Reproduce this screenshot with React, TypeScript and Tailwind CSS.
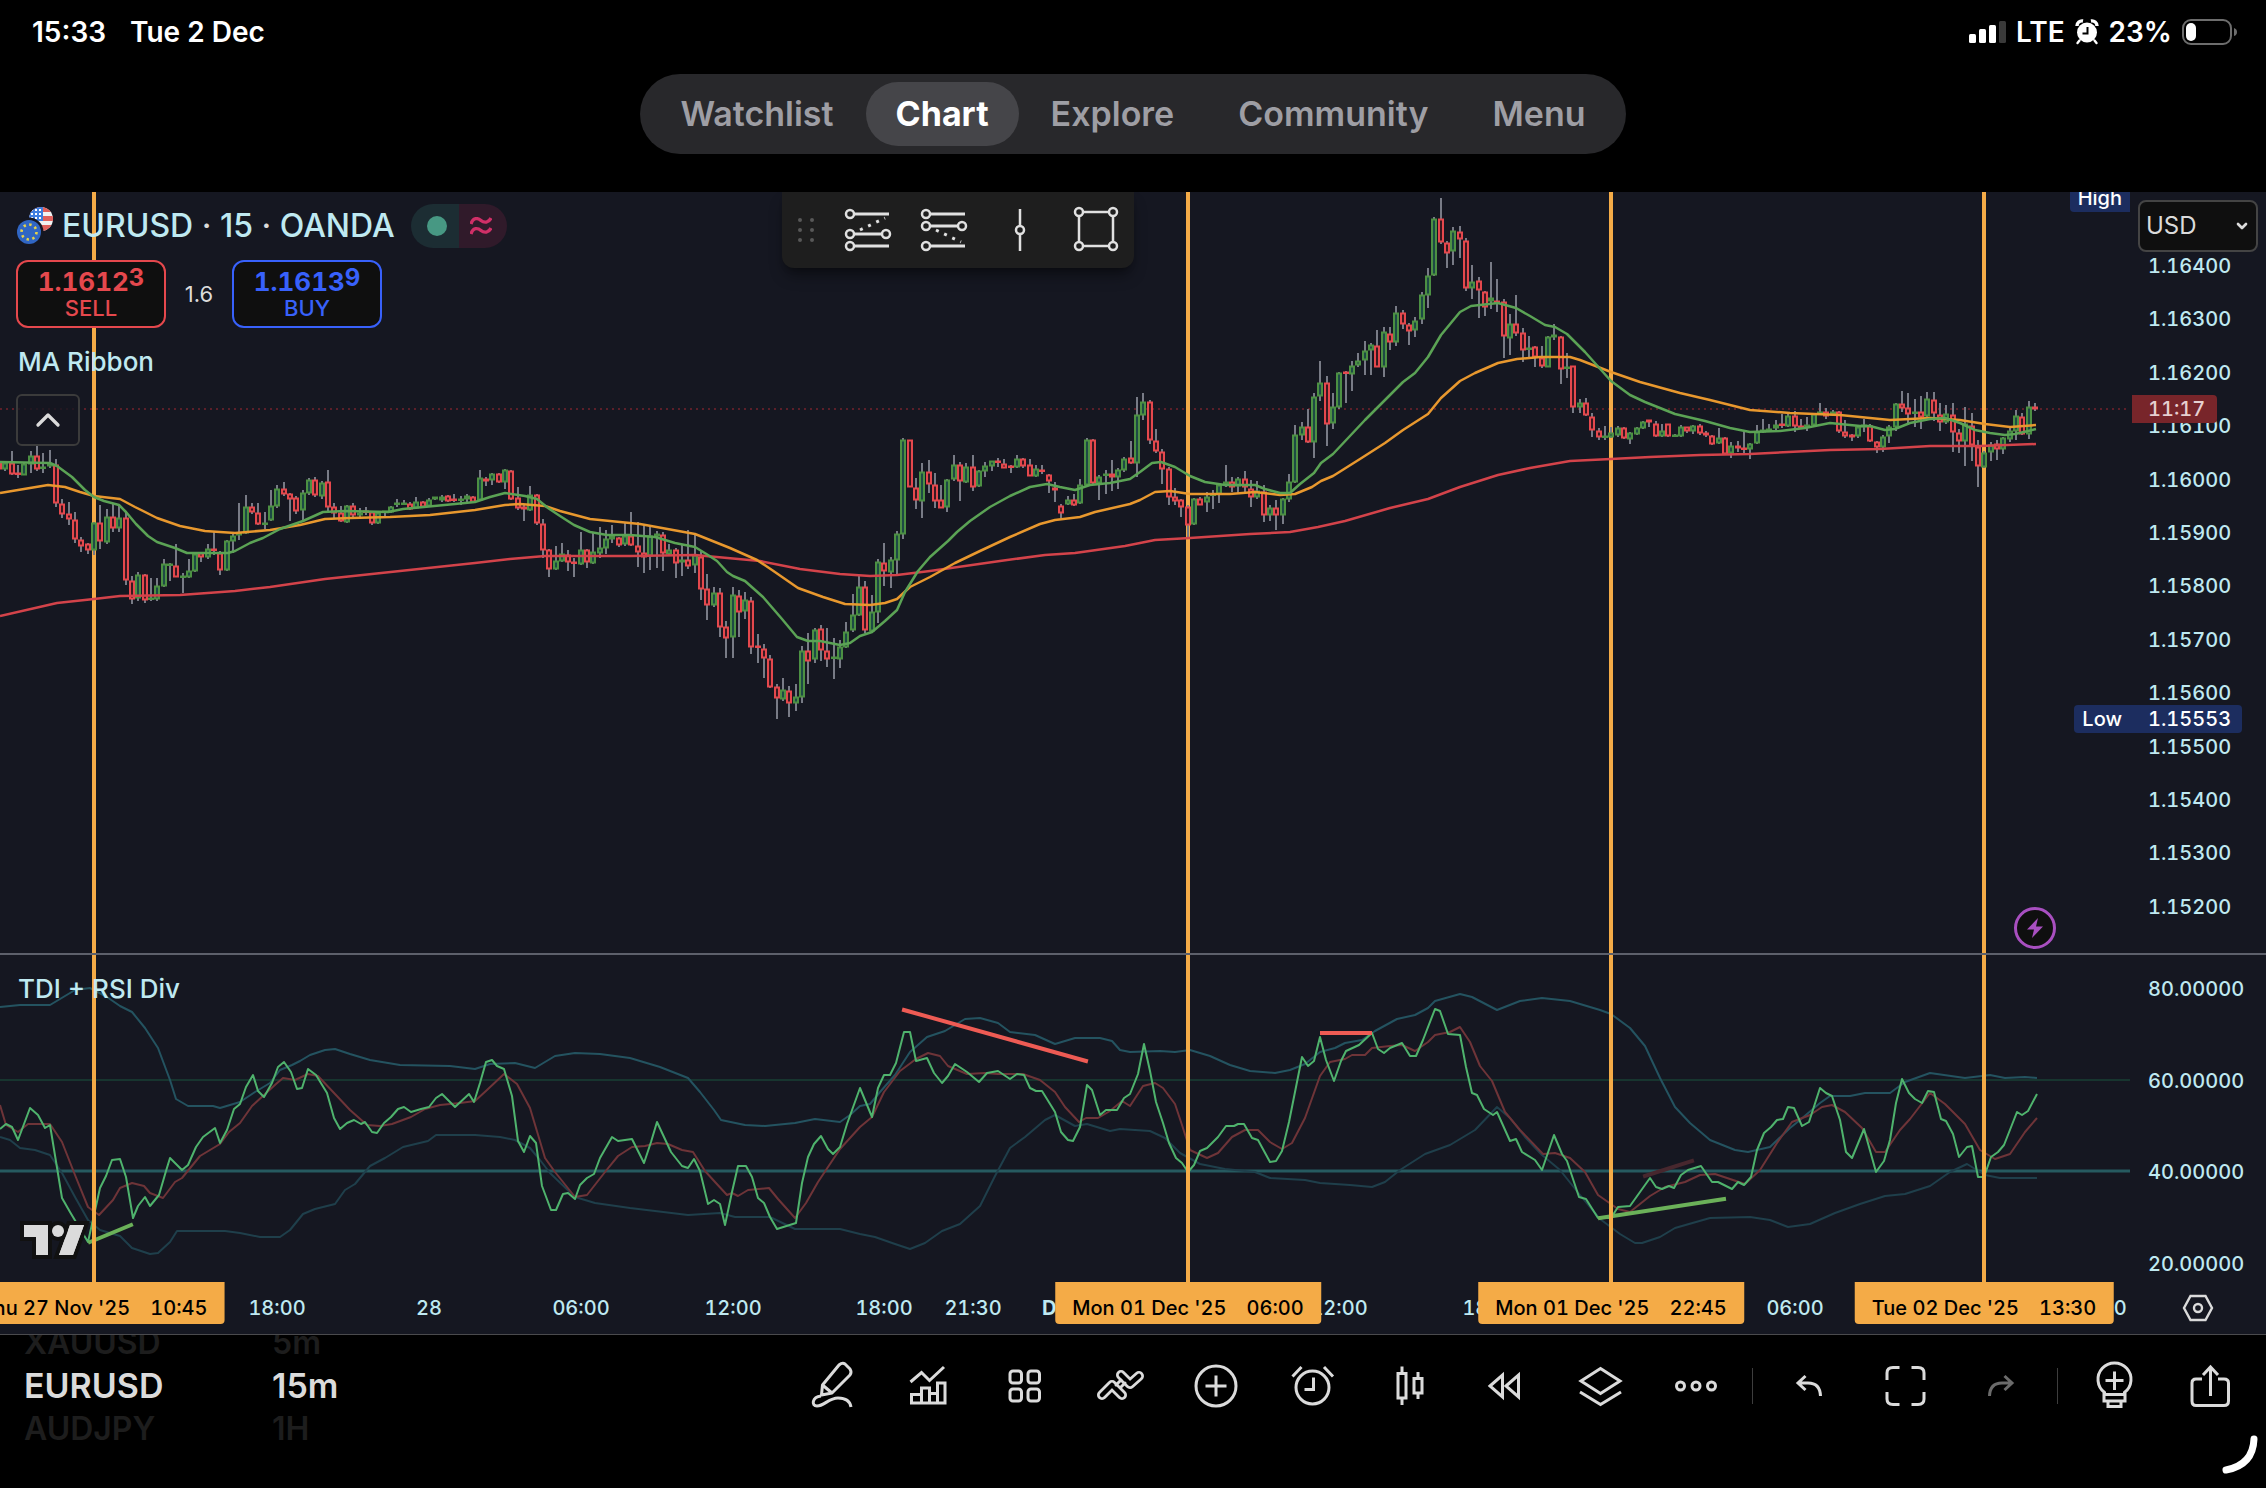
import type { ReactNode } from 'react';
import { ChevronDown, ChevronUp } from 'lucide-react';

type Bar = [open: number, high: number, low: number, close: number];

const PLOT_WIDTH = 2130;
const BAR_STEP = 6.322;
const ORIGIN_X = 94;

const barX = (index: number) => Math.round(ORIGIN_X + index * BAR_STEP);

// Bars are stored as offsets from the top of their block, three units per pixel
const blocks: { first: number; top: number; bars: Bar[] }[] = [
  {
    first: -15,
    top: 400,
    bars: [
      [190, 185, 210, 208], [208, 182, 212, 190], [190, 154, 225, 221], [218, 195, 235, 221], [224, 188, 226, 193],
      [192, 152, 220, 167], [167, 138, 212, 206], [203, 158, 218, 200], [198, 150, 204, 193], [194, 178, 320, 310],
      [313, 297, 355, 341], [341, 305, 375, 358], [360, 335, 430, 416], [419, 411, 455, 438], [433, 430, 462, 451],
      [451, 365, 465, 370], [370, 316, 447, 423], [425, 328, 433, 350], [352, 310, 395, 384], [383, 318, 397, 353],
      [353, 334, 555, 541], [543, 527, 612, 598], [594, 517, 604, 525], [526, 522, 609, 600], [598, 535, 603, 594],
      [597, 535, 602, 558], [558, 476, 562, 493], [495, 489, 543, 491], [497, 433, 532, 530], [531, 518, 580, 528],
      [531, 478, 533, 513], [514, 455, 517, 461], [460, 457, 485, 471], [472, 433, 476, 448], [446, 392, 464, 450],
      [459, 452, 525, 510], [510, 420, 512, 424], [423, 395, 458, 408], [404, 310, 420, 400], [399, 286, 403, 321],
      [321, 308, 342, 336], [338, 310, 375, 371], [373, 336, 388, 369], [361, 270, 363, 318], [319, 254, 324, 266],
      [268, 246, 287, 281], [283, 278, 363, 297], [294, 287, 342, 332], [329, 270, 363, 278], [278, 235, 284, 239],
      [239, 232, 290, 286], [288, 243, 297, 248], [246, 211, 333, 321], [322, 310, 358, 340], [338, 317, 366, 363],
      [366, 315, 370, 319], [319, 308, 350, 344], [344, 324, 350, 340], [333, 322, 346, 337], [337, 333, 376, 368],
      [368, 336, 372, 340], [337, 336, 350, 333], [336, 318, 340, 321], [312, 297, 320, 308], [312, 300, 312, 308],
      [313, 306, 330, 327], [324, 292, 328, 307], [307, 303, 322, 320], [318, 294, 322, 299], [296, 290, 300, 292],
      [300, 285, 306, 290], [289, 284, 305, 302], [296, 282, 305, 300], [301, 289, 315, 297], [298, 282, 307, 289],
      [292, 287, 307, 305], [300, 211, 304, 234], [236, 230, 258, 243], [241, 220, 255, 222], [223, 219, 249, 245],
      [245, 206, 267, 210], [212, 210, 300, 296], [293, 262, 330, 325], [322, 316, 363, 326], [331, 259, 334, 286],
      [285, 282, 374, 368], [373, 358, 474, 451], [451, 446, 532, 506], [506, 437, 510, 484], [484, 430, 487, 462],
      [466, 449, 514, 486], [485, 473, 532, 489], [491, 397, 494, 451], [451, 448, 504, 486], [489, 397, 493, 457],
      [458, 382, 475, 444], [444, 391, 461, 418], [418, 374, 430, 407], [415, 410, 440, 435], [433, 370, 437, 407],
      [408, 337, 438, 434], [438, 367, 502, 457], [459, 371, 520, 470], [467, 378, 510, 408], [409, 394, 503, 403],
      [404, 396, 514, 459], [462, 433, 465, 451], [451, 444, 535, 489], [487, 436, 528, 480], [480, 389, 507, 497],
      [496, 403, 518, 466], [470, 453, 600, 567], [568, 521, 660, 615], [615, 560, 620, 579], [578, 563, 712, 680],
      [682, 662, 773, 714], [711, 560, 773, 586], [588, 570, 710, 635], [633, 575, 658, 600], [603, 591, 762, 740],
      [738, 703, 790, 742], [747, 732, 835, 774], [778, 766, 863, 860], [862, 852, 956, 894], [898, 833, 902, 870],
      [872, 858, 950, 910], [910, 851, 932, 892], [891, 738, 908, 753], [753, 700, 853, 783], [777, 684, 790, 690],
      [688, 675, 783, 751], [754, 683, 801, 776], [775, 713, 836, 771], [776, 721, 805, 742], [740, 666, 743, 695],
      [690, 582, 697, 646], [644, 528, 648, 562], [562, 544, 698, 690], [692, 585, 698, 637], [635, 476, 668, 487],
      [489, 430, 558, 513], [515, 472, 565, 481], [480, 394, 528, 402], [401, 115, 417, 121], [121, 119, 262, 260],
      [263, 233, 327, 299], [302, 188, 355, 217], [216, 181, 280, 251], [254, 220, 325, 302], [301, 256, 325, 323],
      [322, 238, 337, 240], [238, 166, 242, 195], [195, 186, 303, 242], [246, 190, 250, 200], [201, 164, 272, 260],
      [258, 210, 260, 212], [212, 186, 230, 198], [197, 182, 214, 184], [182, 175, 200, 186], [192, 178, 205, 203],
      [197, 196, 218, 201], [200, 166, 203, 178], [178, 174, 203, 198], [195, 178, 229, 227], [227, 195, 231, 207],
      [209, 195, 222, 214], [225, 222, 280, 242], [263, 246, 306, 269], [317, 312, 355, 338], [312, 288, 315, 299],
      [299, 282, 318, 314], [308, 236, 312, 256], [256, 113, 262, 121], [121, 118, 255, 248], [248, 226, 301, 230],
      [226, 211, 282, 222], [222, 181, 274, 230], [230, 203, 267, 210], [211, 170, 215, 177], [174, 122, 192, 188],
      [190, -10, 232, 44], [44, -20, 60, 5], [5, 0, 133, 120], [123, 86, 158, 154], [156, 146, 253, 206],
      [206, 202, 316, 290], [290, 264, 314, 302], [300, 296, 352, 320], [320, 316, 412, 375], [372, 294, 376, 298],
      [296, 292, 316, 314], [307, 276, 337, 290], [286, 270, 327, 283], [282, 250, 310, 255], [253, 196, 262, 247],
      [247, 232, 276, 260], [259, 232, 278, 236], [237, 214, 280, 261], [266, 241, 322, 290], [292, 244, 297, 273],
      [276, 254, 367, 346], [346, 314, 363, 324], [325, 300, 390, 346], [346, 293, 373, 298], [297, 221, 305, 246],
      [245, 76, 248, 104],
    ],
  },
  {
    first: 191,
    top: 180,
    bars: [
      [765, 727, 780, 740], [740, 688, 790, 787], [787, 640, 834, 650], [649, 544, 662, 608], [608, 588, 798, 733],
      [730, 640, 747, 682], [682, 576, 686, 578], [575, 573, 668, 579], [583, 542, 633, 559], [556, 519, 562, 542],
      [539, 484, 585, 512], [511, 488, 585, 494], [498, 451, 562, 560], [560, 441, 590, 455], [461, 440, 509, 486],
      [487, 379, 497, 398], [398, 390, 447, 431], [434, 430, 495, 452], [449, 412, 470, 423], [418, 335, 432, 344],
      [344, 265, 383, 287], [286, 112, 288, 116], [116, 54, 191, 187], [188, 183, 264, 218], [214, 142, 254, 152],
      [155, 139, 233, 178], [182, 173, 334, 325], [325, 256, 356, 305], [302, 292, 413, 331], [335, 333, 408, 382],
      [364, 247, 388, 353], [364, 297, 396, 368], [367, 357, 533, 469], [475, 403, 525, 433], [431, 346, 468, 460],
      [460, 443, 546, 511], [508, 468, 535, 503], [501, 497, 560, 531], [533, 498, 563, 559], [560, 469, 562, 471],
      [470, 433, 480, 466], [471, 468, 612, 566], [565, 519, 595, 560], [559, 557, 698, 680], [680, 658, 698, 669],
      [669, 655, 708, 706], [710, 700, 770, 751], [752, 744, 780, 770], [771, 738, 780, 767], [770, 741, 773, 760],
      [765, 738, 770, 744], [744, 742, 777, 775], [776, 757, 792, 760], [763, 741, 766, 745], [745, 722, 748, 725],
      [721, 719, 740, 725], [733, 722, 771, 769], [768, 733, 771, 752], [733, 731, 771, 769], [769, 762, 771, 765],
      [767, 736, 770, 740], [742, 740, 758, 754], [754, 734, 762, 738], [737, 733, 765, 758], [758, 752, 770, 766],
      [769, 765, 794, 791], [789, 744, 793, 774], [774, 771, 824, 822], [820, 786, 834, 797], [797, 782, 817, 804],
      [803, 752, 822, 807], [806, 790, 837, 793], [790, 736, 793, 755], [755, 716, 758, 751], [752, 731, 754, 748],
      [745, 719, 756, 735], [732, 702, 745, 735], [737, 703, 742, 707], [707, 693, 756, 738], [737, 718, 745, 741],
      [741, 710, 753, 734], [734, 699, 737, 703], [703, 670, 706, 696], [697, 684, 718, 709], [706, 691, 709, 695],
      [695, 693, 758, 754], [757, 721, 774, 767], [766, 763, 782, 770], [769, 737, 773, 740], [740, 718, 755, 736],
      [737, 733, 786, 783], [787, 782, 819, 800], [802, 766, 817, 770], [769, 735, 788, 741], [740, 669, 754, 673],
      [671, 633, 697, 684], [685, 640, 735, 702], [700, 658, 741, 696], [695, 649, 747, 710], [709, 637, 713, 656],
      [660, 637, 722, 700], [706, 670, 752, 727], [727, 675, 733, 703], [705, 670, 815, 757], [758, 748, 820, 783],
      [784, 682, 858, 732], [737, 700, 843, 795], [800, 780, 922, 859], [860, 812, 865, 820], [817, 787, 843, 796],
      [792, 780, 840, 808], [808, 770, 822, 773], [776, 742, 785, 754], [752, 690, 780, 708], [711, 700, 766, 763],
      [763, 664, 776, 682], [680, 668, 693, 688],
    ],
  },
];

const fastMa =
  '0,462 50,463 57,466 72,477 85,490 94,497 104,501 119,505 126,512 136,524 148,536 157,542 175,548 187,553 206,553 228,553 235,551 250,543 263,538 280,529 303,521 323,512 345,511 388,512 403,509 455,504 475,502 490,497 505,493 525,496 537,499 548,508 560,516 574,525 590,532 607,535 630,535 655,537 675,543 695,547 708,555 717,561 727,572 733,576 745,581 763,597 782,619 797,637 808,641 820,641 840,645 850,643 860,636 872,632 885,621 897,610 905,592 918,571 930,557 948,541 957,532 970,521 990,507 1010,496 1030,487 1047,484 1060,487 1075,490 1090,485 1110,483 1130,479 1140,472 1152,463 1161,462 1175,467 1190,476 1205,482 1225,485 1255,485 1265,489 1280,493 1290,493 1300,484 1314,473 1321,463 1333,454 1365,420 1389,396 1403,382 1415,373 1428,357 1441,335 1460,312 1471,306 1498,303 1516,308 1530,316 1545,325 1555,327 1567,334 1585,352 1611,381 1630,395 1645,402 1675,414 1705,421 1730,428 1750,432 1780,431 1805,428 1830,423 1860,426 1870,426 1885,430 1895,429 1910,423 1930,419 1945,418 1960,423 1975,430 1990,433 2005,435 2015,434 2028,431 2036,429';

const midMa =
  '0,493 24,489 48,485 65,487 80,492 94,496 120,499 135,507 157,518 180,526 205,531 235,533 270,530 300,525 325,519 350,518 390,517 430,515 475,510 505,505 520,504 545,506 560,511 590,519 640,524 695,534 730,548 757,560 772,570 798,588 823,597 845,604 870,605 885,603 897,599 910,587 930,577 955,563 980,551 1010,537 1040,524 1055,520 1080,517 1095,512 1130,504 1140,500 1155,492 1170,491 1190,494 1230,494 1255,492 1280,495 1295,494 1312,487 1321,481 1333,476 1360,459 1385,443 1403,430 1428,414 1441,398 1460,381 1475,373 1498,363 1517,359 1540,357 1555,357 1570,357 1580,360 1611,372 1640,382 1680,393 1710,400 1750,410 1790,413 1840,415 1870,418 1890,420 1930,418 1960,420 1985,424 2010,427 2036,425';

const slowMa =
  '0,616 57,603 94,599 120,596 180,595 235,591 270,587 325,579 400,571 475,563 510,559 545,556 630,556 695,555 760,561 800,569 840,574 870,576 897,575 930,571 1000,561 1045,555 1075,553 1125,546 1155,540 1190,538 1250,534 1290,532 1318,527 1345,521 1390,508 1428,499 1460,487 1498,475 1530,468 1570,461 1611,459 1650,457 1700,455 1750,454 1830,450 1880,449 1930,446 1980,446 2036,444';

const rsi =
  '0,1129 6,1124 12,1127 18,1140 30,1108 38,1115 45,1128 50,1125 62,1198 70,1212 76,1222 88,1242 100,1188 106,1176 112,1160 120,1159 126,1177 133,1218 138,1206 145,1197 150,1206 159,1195 166,1171 170,1158 182,1170 188,1165 196,1147 203,1137 215,1128 220,1143 227,1130 234,1109 240,1104 246,1087 253,1075 258,1091 264,1097 272,1083 278,1067 284,1062 291,1072 297,1089 302,1088 308,1069 316,1075 327,1093 334,1118 340,1129 347,1123 354,1120 361,1124 365,1122 372,1132 377,1133 384,1123 391,1117 398,1109 404,1107 411,1112 421,1109 429,1107 436,1098 442,1094 455,1107 469,1094 474,1102 480,1083 486,1062 492,1060 497,1066 504,1069 512,1096 518,1141 524,1152 530,1136 536,1143 542,1186 551,1210 556,1210 563,1194 568,1193 575,1199 580,1185 587,1178 594,1174 600,1158 612,1137 618,1141 632,1139 644,1163 651,1142 657,1122 671,1152 682,1166 688,1168 694,1159 700,1171 708,1204 714,1200 720,1204 725,1225 732,1192 738,1166 746,1166 752,1177 758,1198 764,1203 770,1217 777,1229 796,1223 802,1183 808,1157 814,1144 821,1136 828,1149 833,1154 840,1147 847,1124 860,1088 872,1117 878,1088 884,1075 890,1075 896,1063 904,1032 910,1032 916,1061 927,1058 934,1073 942,1083 948,1076 955,1064 967,1072 979,1082 987,1073 998,1071 1010,1079 1017,1074 1024,1075 1030,1088 1036,1091 1042,1091 1055,1112 1061,1132 1068,1140 1073,1141 1080,1127 1087,1085 1092,1090 1100,1115 1106,1110 1117,1110 1124,1098 1130,1094 1138,1074 1144,1044 1150,1071 1156,1102 1163,1123 1169,1143 1176,1158 1182,1163 1188,1172 1194,1165 1200,1151 1207,1148 1218,1137 1226,1126 1234,1126 1238,1124 1244,1124 1252,1138 1258,1140 1270,1162 1276,1161 1282,1151 1289,1122 1302,1057 1308,1066 1314,1061 1320,1037 1326,1060 1334,1081 1341,1061 1346,1051 1359,1045 1372,1033 1378,1049 1384,1053 1390,1048 1402,1043 1410,1056 1416,1056 1423,1040 1435,1009 1440,1011 1448,1034 1460,1035 1466,1067 1472,1093 1477,1095 1484,1109 1493,1115 1497,1112 1510,1141 1516,1139 1522,1152 1535,1160 1542,1170 1554,1135 1562,1154 1567,1161 1579,1197 1586,1199 1598,1218 1611,1218 1618,1207 1630,1206 1650,1178 1656,1187 1662,1189 1669,1186 1674,1188 1681,1175 1688,1170 1701,1166 1712,1182 1718,1182 1732,1189 1738,1182 1744,1185 1751,1177 1757,1150 1764,1133 1771,1127 1777,1120 1783,1119 1788,1107 1794,1108 1802,1126 1809,1122 1820,1088 1826,1093 1832,1096 1840,1120 1846,1152 1852,1158 1864,1129 1876,1172 1884,1161 1890,1140 1896,1103 1902,1079 1909,1093 1915,1099 1922,1103 1928,1091 1934,1092 1941,1119 1946,1121 1953,1134 1959,1157 1967,1147 1972,1146 1978,1177 1984,1177 1991,1157 1998,1152 2004,1145 2017,1112 2022,1115 2028,1111 2037,1094';

const signal =
  '0,1105 6,1125 18,1132 28,1124 50,1124 62,1142 75,1175 88,1207 99,1215 113,1200 120,1188 132,1183 144,1186 150,1193 163,1198 175,1182 182,1178 200,1156 220,1144 229,1132 240,1123 252,1106 264,1095 276,1084 283,1078 295,1080 308,1074 318,1076 335,1094 350,1110 367,1125 380,1126 392,1124 411,1117 425,1109 440,1105 460,1103 475,1101 487,1090 504,1074 517,1084 530,1108 545,1158 555,1172 575,1197 587,1195 605,1172 618,1156 632,1147 645,1146 657,1143 668,1144 682,1150 693,1152 705,1171 715,1182 727,1195 732,1193 738,1196 748,1190 769,1188 778,1199 795,1218 806,1203 818,1182 840,1149 860,1127 872,1117 884,1092 900,1071 916,1059 928,1053 940,1056 948,1066 967,1074 985,1073 998,1074 1023,1074 1040,1080 1055,1092 1065,1107 1079,1122 1086,1118 1098,1118 1110,1111 1122,1101 1130,1106 1143,1086 1155,1083 1163,1088 1175,1104 1182,1125 1190,1150 1207,1158 1218,1153 1232,1137 1245,1130 1258,1130 1270,1142 1282,1149 1292,1143 1305,1118 1320,1076 1330,1062 1345,1059 1352,1055 1365,1055 1372,1048 1390,1046 1402,1045 1415,1051 1428,1042 1435,1035 1450,1032 1460,1027 1470,1042 1480,1066 1492,1081 1505,1112 1520,1130 1543,1154 1555,1153 1570,1158 1585,1172 1598,1195 1618,1209 1630,1212 1650,1196 1665,1187 1685,1182 1700,1175 1715,1174 1730,1179 1745,1184 1760,1170 1777,1143 1792,1122 1810,1115 1822,1107 1832,1105 1845,1112 1862,1128 1876,1152 1885,1152 1900,1130 1910,1119 1930,1093 1945,1104 1965,1124 1980,1150 1995,1159 2010,1154 2025,1132 2037,1118';

const upperBand =
  '0,1007 20,1005 50,1005 75,990 90,988 107,997 120,1006 132,1012 145,1028 158,1048 170,1080 176,1099 188,1106 213,1106 220,1108 240,1102 255,1092 270,1083 280,1070 292,1065 300,1061 310,1055 325,1050 335,1049 350,1054 370,1060 400,1065 450,1066 475,1069 490,1064 515,1063 535,1068 555,1056 575,1053 600,1054 630,1058 660,1067 688,1078 700,1092 714,1110 721,1120 745,1125 765,1126 795,1123 815,1119 840,1122 850,1115 860,1106 870,1104 880,1092 895,1075 910,1052 927,1037 945,1031 965,1019 980,1018 998,1023 1010,1032 1035,1035 1055,1044 1075,1038 1100,1038 1112,1041 1120,1050 1130,1052 1160,1051 1175,1052 1190,1050 1210,1056 1230,1065 1250,1071 1275,1073 1290,1070 1305,1064 1320,1052 1335,1048 1345,1043 1362,1040 1375,1031 1397,1019 1415,1015 1428,1008 1435,1001 1460,994 1472,997 1497,1010 1520,1001 1542,998 1570,1001 1600,1010 1611,1014 1630,1028 1645,1046 1660,1078 1675,1107 1690,1123 1710,1140 1735,1150 1748,1152 1770,1147 1790,1128 1800,1120 1820,1103 1830,1096 1850,1096 1865,1093 1890,1093 1905,1082 1930,1073 1965,1078 1990,1075 2005,1078 2025,1077 2037,1078';

const lowerBand =
  '0,1137 10,1140 20,1148 35,1150 50,1155 62,1173 75,1197 88,1220 100,1230 120,1236 132,1248 150,1254 158,1253 170,1242 177,1231 225,1231 240,1233 260,1237 280,1237 290,1230 303,1214 315,1209 335,1204 345,1190 355,1184 370,1166 385,1158 403,1147 428,1141 436,1135 475,1135 500,1137 515,1140 530,1148 540,1160 550,1173 575,1197 595,1203 630,1208 655,1211 688,1215 720,1213 735,1217 770,1217 795,1229 840,1229 860,1234 875,1237 895,1244 910,1249 925,1243 942,1231 960,1224 980,1206 995,1176 1010,1148 1025,1137 1045,1120 1055,1115 1075,1126 1087,1124 1110,1131 1120,1129 1150,1131 1165,1138 1180,1153 1200,1164 1225,1169 1255,1172 1270,1178 1305,1180 1320,1183 1350,1185 1372,1187 1385,1182 1400,1170 1425,1154 1450,1145 1475,1130 1497,1107 1510,1118 1525,1137 1542,1155 1560,1170 1580,1195 1600,1219 1620,1234 1635,1243 1642,1243 1660,1237 1675,1228 1710,1218 1750,1217 1770,1220 1788,1227 1810,1224 1835,1213 1860,1204 1885,1196 1905,1194 1930,1186 1950,1172 1967,1164 1985,1175 2000,1178 2037,1178';

const markers = [
  { bar: 0, date: "Thu 27 Nov '25", time: '10:45' },
  { bar: 173, date: "Mon 01 Dec '25", time: '06:00' },
  { bar: 240, date: "Mon 01 Dec '25", time: '22:45' },
  { bar: 299, date: "Tue 02 Dec '25", time: '13:30' },
];

const ticks = [
  { bar: 29, label: '18:00' },
  { bar: 53, label: '28' },
  { bar: 77, label: '06:00' },
  { bar: 101, label: '12:00' },
  { bar: 125, label: '18:00' },
  { bar: 139, label: '21:30' },
  { bar: 153, label: 'Dec', bold: true },
  { bar: 197, label: '12:00' },
  { bar: 221, label: '18:00' },
  { bar: 269, label: '06:00' },
  { bar: 317, label: '18:00' },
];

const prices = [
  '1.16400', '1.16300', '1.16200', '1.16100', '1.16000', '1.15900', '1.15800',
  '1.15700', '1.15600', '1.15500', '1.15400', '1.15300', '1.15200',
];

const levels = ['80.00000', '60.00000', '40.00000', '20.00000'];

const tabs = ['Watchlist', 'Chart', 'Explore', 'Community', 'Menu'];

function toPercent(bar: number) {
  return `${(barX(bar) / PLOT_WIDTH) * 100}%`;
}

function Icon({ children, className = '' }: { children: ReactNode; className?: string }) {
  return (
    <svg
      viewBox="0 0 56 56"
      className={`size-14 ${className}`}
      fill="none"
      stroke="currentColor"
      strokeWidth="3"
      aria-hidden="true"
    >
      {children}
    </svg>
  );
}

function ToolButton({ label, children, disabled }: { label: string; children: ReactNode; disabled?: boolean }) {
  return (
    <button
      type="button"
      aria-label={label}
      disabled={disabled}
      className="flex h-14 w-24 items-center justify-center text-[#dbdbdb] disabled:text-[#6b6b6b]"
    >
      <Icon>{children}</Icon>
    </button>
  );
}

function Separator() {
  return <div className="mx-2 h-9 w-px bg-[#3d3d3d]" />;
}

function StatusBar() {
  return (
    <header className="flex h-16 items-center justify-between pr-7 pl-8 text-[28px] leading-8 font-semibold text-white">
      <div className="flex gap-6">
        <span>15:33</span>
        <span>Tue 2 Dec</span>
      </div>
      <div className="flex items-center gap-2.5">
        <svg viewBox="0 0 37 22" className="h-[22px] w-[37px]" fill="#fff" aria-label="Signal strength">
          <rect x="0" y="13" width="7" height="9" rx="1.5" />
          <rect x="10" y="8" width="7" height="14" rx="1.5" />
          <rect x="20" y="4" width="7" height="18" rx="1.5" />
          <rect x="30" y="0" width="7" height="22" rx="1.5" fill="#3a3a3a" />
        </svg>
        <span>LTE</span>
        <svg viewBox="0 0 24 26" className="h-[26px] w-6" aria-label="Alarm set">
          <path d="M2 7A5 5 0 0 1 8 2M22 7A5 5 0 0 0 16 2" stroke="#fff" strokeWidth="3.4" fill="none" />
          <circle cx="12" cy="13.500" r="10" fill="#fff" />
          <path d="M4.500 21.500 2.500 24M19.500 21.500 21.500 24" stroke="#fff" strokeWidth="2.4" strokeLinecap="round" />
          <path d="M12.500 8V14.500H7.500" stroke="#000" strokeWidth="2" fill="none" />
        </svg>
        <span>23%</span>
        <svg viewBox="0 0 56 26" className="h-[26px] w-14" aria-label="Battery">
          <rect x="1" y="1" width="48" height="24" rx="8" fill="none" stroke="#6d6d6d" strokeWidth="2" />
          <rect x="4" y="4" width="10" height="18" rx="5" fill="#fff" />
          <path d="M52 9Q55 10 55 13T52 17Z" fill="#6d6d6d" />
        </svg>
      </div>
    </header>
  );
}

function NavTabs() {
  return (
    <nav className="flex justify-center pt-2.5 pb-[38px]">
      <div className="flex h-20 items-center rounded-full bg-[#28282b] px-2 text-[34px] leading-10 font-semibold">
        {tabs.map((tab) => (
          <button
            key={tab}
            type="button"
            className={
              tab === 'Chart'
                ? 'h-16 rounded-full bg-[#454549] px-[30px] font-bold text-white'
                : 'h-16 rounded-full px-8 text-[#9e9ea4]'
            }
          >
            {tab}
          </button>
        ))}
      </div>
    </nav>
  );
}

function MarkerLines({ y1, y2 }: { y1: number; y2: number }) {
  return (
    <g stroke="#f4ab47" strokeWidth="4">
      {markers.map((m) => (
        <line key={m.bar} x1={barX(m.bar)} x2={barX(m.bar)} y1={y1} y2={y2} />
      ))}
    </g>
  );
}

function Candles() {
  return (
    <g strokeWidth="2">
      {blocks.map((block) =>
        block.bars.map(([open, high, low, close], i) => {
          const x = barX(block.first + i);
          const y = (v: number) => Math.round(block.top + v / 3);
          const up = close < open;
          const top = y(Math.min(open, close)) + 0.5;
          const height = Math.max(y(Math.max(open, close)) - top - 0.5, 0.5);
          return (
            <g key={block.first + i}>
              <line x1={x} x2={x} y1={y(high)} y2={y(low)} stroke="#787b86" />
              <rect
                x={x - 2}
                y={top}
                width="4"
                height={height}
                fill={up ? '#1d4a45' : '#3a1820'}
                stroke={up ? '#4c9043' : '#e5484d'}
              />
            </g>
          );
        }),
      )}
    </g>
  );
}

function PriceCanvas() {
  return (
    <svg
      viewBox="0 192 2130 761"
      preserveAspectRatio="none"
      className="absolute inset-0 size-full"
      fill="none"
      aria-label="EURUSD candles"
    >
      <line x1="0" x2="2130" y1="409" y2="409" stroke="#5c1f29" strokeWidth="2" strokeDasharray="2 4" />
      <MarkerLines y1={192} y2={953} />
      <Candles />
      <g strokeWidth="2.5" strokeLinejoin="round">
        <polyline points={slowMa} stroke="#d3434a" />
        <polyline points={midMa} stroke="#e8982e" />
        <polyline points={fastMa} stroke="#5ba355" />
      </g>
    </svg>
  );
}

function IndicatorCanvas() {
  return (
    <svg
      viewBox="0 955 2130 327"
      preserveAspectRatio="none"
      className="absolute inset-0 size-full"
      fill="none"
      aria-label="TDI and RSI divergence"
    >
      <line x1="0" x2="2130" y1="1080" y2="1080" stroke="#17352f" strokeWidth="2" />
      <line x1="0" x2="2130" y1="1171" y2="1171" stroke="#265a60" strokeWidth="3" />
      <g strokeWidth="2" strokeLinejoin="round">
        <polyline points={upperBand} stroke="#245360" />
        <polyline points={lowerBand} stroke="#1f3f4b" />
        <polyline points={signal} stroke="#6e3438" />
        <polyline points={rsi} stroke="#4fb36d" />
      </g>
      <g strokeWidth="4" strokeLinecap="square">
        <line x1="904" y1="1010" x2="1086" y2="1061" stroke="#ee5b54" />
        <line x1="1322" y1="1033" x2="1370" y2="1033" stroke="#ee5b54" />
        <line x1="1645" y1="1176" x2="1692" y2="1161" stroke="#47272e" />
        <line x1="90" y1="1242" x2="131" y2="1225" stroke="#6bb159" />
        <line x1="1600" y1="1218" x2="1724" y2="1199" stroke="#6bb159" />
      </g>
      <MarkerLines y1={955} y2={1282} />
    </svg>
  );
}

function PairFlags() {
  return (
    <svg viewBox="0 0 38 40" className="h-10 w-[38px]" aria-hidden="true">
      <defs>
        <clipPath id="us">
          <circle cx="25" cy="13" r="12" />
        </clipPath>
      </defs>
      <g clipPath="url(#us)">
        <rect x="13" y="1" width="24" height="24" fill="#f2f2f2" />
        <rect x="13" y="1" width="24" height="5" fill="#e0605c" />
        <rect x="13" y="10" width="24" height="5" fill="#e0605c" />
        <rect x="13" y="19" width="24" height="6" fill="#e0605c" />
        <rect x="13" y="1" width="14" height="14" fill="#3f7fe0" />
        <path d="M15 4h12M15 8h12M15 12h12" stroke="#fff" strokeWidth="2" strokeDasharray="2 2" />
      </g>
      <circle cx="13" cy="26" r="14.500" fill="#151721" />
      <circle cx="13" cy="26" r="12" fill="#3066c4" />
      <circle cx="13" cy="26" r="7.500" fill="none" stroke="#e6d34a" strokeWidth="2.6" strokeDasharray="2.4 3.490" />
    </svg>
  );
}

function Quote({ side, price, pip }: { side: 'SELL' | 'BUY'; price: string; pip: string }) {
  const tone = side === 'SELL' ? 'border-[#e5484d] text-[#e5484d]' : 'border-[#3861fb] text-[#3861fb]';
  return (
    <button
      type="button"
      className={`flex h-[68px] w-[150px] flex-col items-center justify-center rounded-xl border-2 bg-[#0f0f0f] ${tone}`}
    >
      <span className="flex h-7 items-start text-[26px] leading-8 font-bold tabular-nums">
        {price}
        <span className="text-2xl leading-6">{pip}</span>
      </span>
      <span className="text-[22px] leading-7 font-medium">{side}</span>
    </button>
  );
}

function Legend() {
  return (
    <div className="relative flex flex-col items-start pt-3 pl-4">
      <div className="flex items-center">
        <div className="flex items-center gap-2 text-[32px] leading-11 font-medium text-[#bfe9f1]">
          <PairFlags />
          <h1>
            EURUSD <span className="text-[#dbdbdb]">·</span> 15 <span className="text-[#dbdbdb]">·</span> OANDA
          </h1>
        </div>
        <div className="ml-4 flex h-11 w-24 overflow-hidden rounded-full">
          <span className="flex w-12 items-center justify-center bg-[#1c2d33]">
            <span className="ml-1 size-5 rounded-full bg-[#479883]" />
          </span>
          <span className="flex w-12 items-center justify-center bg-[#301a2a] text-[#d02f67]">
            <svg viewBox="0 0 22 18" className="mr-1 h-[18px] w-[22px]" fill="none" stroke="currentColor" strokeWidth="3.4">
              <path d="M1 7C3 0 8 1 11 3.500S19 6 21 1M1 17C3 10 8 11 11 13.500S19 16 21 11" />
            </svg>
          </span>
        </div>
      </div>
      <div className="mt-3 flex items-center">
        <Quote side="SELL" price="1.1612" pip="3" />
        <span className="w-[66px] text-center text-[22px] text-[#dbdbdb]">1.6</span>
        <Quote side="BUY" price="1.1613" pip="9" />
      </div>
      <p className="mt-[18px] pl-0.5 text-[26px] leading-8 font-medium text-[#bfe9f1]">MA Ribbon</p>
      <button
        type="button"
        aria-label="Collapse legend"
        className="mt-4 flex h-[52px] w-16 items-center justify-center rounded-md border-2 border-[#3b3b3b] bg-[#151721]/80 text-[#dbdbdb]"
      >
        <ChevronUp size={40} strokeWidth={2} />
      </button>
    </div>
  );
}

function DrawingToolbar() {
  const button = 'flex w-[76px] items-center justify-center text-[#e0e0e0]';
  return (
    <div className="absolute top-0 left-[782px] flex h-[76px] items-center rounded-b-xl bg-[#1e1e1e] pl-3 shadow-lg shadow-black/40">
      <svg viewBox="0 0 24 26" className="h-[26px] w-6" fill="#585858" aria-hidden="true">
        {[3, 13, 23].map((y) => (
          <g key={y}>
            <circle cx="6" cy={y} r="2" />
            <circle cx="18" cy={y} r="2" />
          </g>
        ))}
      </svg>
      <div className="flex pl-3">
        <button type="button" aria-label="Long position" className={button}>
          <Icon>
            <path d="M14 12H49M14 32H42M14 44H49" />
            <path d="M20 28 45 16" strokeDasharray="3 6" />
            <g strokeWidth="2.5">
              <circle cx="10" cy="12" r="4" />
              <circle cx="10" cy="32" r="4" />
              <circle cx="46" cy="32" r="4" />
              <circle cx="10" cy="44" r="4" />
            </g>
          </Icon>
        </button>
        <button type="button" aria-label="Short position" className={button}>
          <Icon>
            <path d="M14 12H49M14 24H42M14 44H49" />
            <path d="M20 28 45 40" strokeDasharray="3 6" />
            <g strokeWidth="2.5">
              <circle cx="10" cy="12" r="4" />
              <circle cx="10" cy="24" r="4" />
              <circle cx="46" cy="24" r="4" />
              <circle cx="10" cy="44" r="4" />
            </g>
          </Icon>
        </button>
        <button type="button" aria-label="Vertical line" className={button}>
          <Icon>
            <path d="M28 7V24M28 32V49" strokeWidth="2.5" />
            <circle cx="28" cy="28" r="4" strokeWidth="2.5" />
          </Icon>
        </button>
        <button type="button" aria-label="Rectangle" className={button}>
          <Icon>
            <path d="M15 10H41M15 44H41M11 14V40M45 14V40" strokeWidth="2.5" />
            <g strokeWidth="2.5">
              <circle cx="11" cy="10" r="4" />
              <circle cx="45" cy="10" r="4" />
              <circle cx="11" cy="44" r="4" />
              <circle cx="45" cy="44" r="4" />
            </g>
          </Icon>
        </button>
      </div>
    </div>
  );
}

function PriceAxis() {
  return (
    <div className="relative w-[136px] shrink-0">
      <div className="flex h-full flex-col justify-between pt-15 pb-8 pl-[18px] text-xl leading-7 font-medium text-[#bfe9f1] tabular-nums">
        {prices.map((price) => (
          <span key={price}>{price}</span>
        ))}
      </div>
      <span className="absolute top-[203px] left-0.5 w-[85px] rounded-r bg-[#78252a] pl-4 text-xl leading-7 font-medium text-[#e6cfd0] tabular-nums">
        11:17
      </span>
      <span className="absolute top-[513px] left-0 w-28 rounded-r bg-[#1c2d5f] pl-[18px] text-xl leading-7 font-medium text-white tabular-nums">
        1.15553
      </span>
      <label className="absolute top-2 left-2 flex h-[52px] w-[120px] items-center rounded-lg border-2 border-[#444] bg-[#0f0f0f]">
        <span className="sr-only">Currency</span>
        <select className="size-full appearance-none pl-1.5 text-2xl text-[#dbdbdb]" defaultValue="USD">
          <option>USD</option>
          <option>EUR</option>
        </select>
        <ChevronDown size={16} strokeWidth={4} className="pointer-events-none absolute right-1.5 text-[#dbdbdb]" />
      </label>
    </div>
  );
}

function PricePane() {
  return (
    <div className="flex min-h-[480px] flex-1">
      <div className="relative flex-1 overflow-hidden">
        <PriceCanvas />
        <Legend />
        <DrawingToolbar />
        <span className="absolute -top-2 right-0 rounded-l bg-[#1c2d5f] px-2 text-xl leading-7 font-medium text-white">High</span>
        <span className="absolute top-[513px] right-0 rounded-l bg-[#1c2d5f] px-2 text-xl leading-7 font-medium text-white">Low</span>
        <button
          type="button"
          aria-label="Events"
          className="absolute right-[74px] bottom-1 flex size-[42px] items-center justify-center rounded-full border-3 border-[#a84fc0] bg-[#0f0f0f]"
        >
          <svg viewBox="0 0 20 22" className="h-[22px] w-5" fill="#a84fc0">
            <path d="M13 1 2 12.500H9L7 21 18 9.500H11Z" />
          </svg>
        </button>
      </div>
      <PriceAxis />
    </div>
  );
}

function IndicatorPane() {
  return (
    <div className="flex h-[327px]">
      <div className="relative flex-1 overflow-hidden">
        <IndicatorCanvas />
        <p className="relative pt-4 pl-[18px] text-[26px] leading-9 font-medium text-[#bfe9f1]">TDI + RSI Div</p>
        <svg
          viewBox="0 0 72 42"
          className="absolute bottom-[21px] left-[18px] h-[42px] w-[72px]"
          fill="#dbdbdb"
          stroke="#111"
          strokeWidth="8"
          paintOrder="stroke"
          aria-label="TradingView"
        >
          <path d="M6 6H30V36H18V18H6Z" />
          <path d="M52 6H66L55 36H41Z" />
          <circle cx="40" cy="12" r="6" />
          <path d="M6 6H30V36H18V18H6ZM52 6H66L55 36H41Z" stroke="none" />
        </svg>
      </div>
      <div className="flex w-[136px] shrink-0 flex-col justify-between pt-5 pb-1 pl-[18px] text-xl leading-7 font-medium text-[#bfe9f1] tabular-nums">
        {levels.map((level) => (
          <span key={level}>{level}</span>
        ))}
      </div>
    </div>
  );
}

function TimeAxis() {
  return (
    <div className="flex h-[52px] text-xl leading-7 font-medium tabular-nums">
      <div className="relative flex-1 overflow-hidden">
        {ticks.map((tick) => (
          <span
            key={tick.bar}
            className={`absolute top-3 -translate-x-1/2 text-[#bfe9f1] ${tick.bold ? 'font-bold' : ''}`}
            style={{ left: toPercent(tick.bar) }}
          >
            {tick.label}
          </span>
        ))}
        {markers.map((m) => (
          <span
            key={m.bar}
            className="absolute top-0 flex h-[42px] -translate-x-1/2 gap-5 rounded-b bg-[#f4ab47] px-[17px] pt-3 whitespace-nowrap text-black"
            style={{ left: toPercent(m.bar) }}
          >
            <span>{m.date}</span>
            <span>{m.time}</span>
          </span>
        ))}
      </div>
      <div className="flex w-[136px] shrink-0 items-center justify-center">
        <button type="button" aria-label="Axis settings" className="text-[#dbdbdb]">
          <svg viewBox="0 0 32 28" className="h-7 w-8" fill="none" stroke="currentColor" strokeWidth="2.4">
            <path d="M8.500 2H23.500L30 14 23.500 26H8.500L2 14Z" />
            <circle cx="16" cy="14" r="4" />
          </svg>
        </button>
      </div>
    </div>
  );
}

function Wheel({ options, label }: { options: [string, string, string]; label: string }) {
  return (
    <div role="group" aria-label={label} className="flex flex-col items-start font-semibold">
      <button type="button" className="text-[32px] leading-9 text-[#1d1d1d]">{options[0]}</button>
      <button type="button" className="text-[34px] leading-[50px] text-[#dbdbdb]">{options[1]}</button>
      <button type="button" className="text-[32px] leading-9 text-[#1d1d1d]">{options[2]}</button>
    </div>
  );
}

function BottomBar() {
  return (
    <footer className="relative flex h-[154px] items-start justify-between overflow-hidden border-t border-[#4a4a4d] bg-black pr-2">
      <div className="-mt-2.5 grid grid-cols-[248px_auto] pl-6">
        <Wheel label="Symbol" options={['XAUUSD', 'EURUSD', 'AUDJPY']} />
        <Wheel label="Interval" options={['5m', '15m', '1H']} />
      </div>
      <div className="flex items-center pt-[23px]">
        <ToolButton label="Draw">
          <path d="M17.500 37 18.500 27 35 7Q38.500 4 41 6L46 11Q48 14 46 17L28 35ZM18.500 27 28 35" strokeLinejoin="round" />
          <path d="M17 38C8 39 7 48 13 48 20 48 25 40 34 40 41 40 46 43 47 49" />
        </ToolButton>
        <ToolButton label="Indicators">
          <path d="M10.500 24 21.500 14.500 29.500 22.500 44 9" />
          <path d="M11.500 45V36.500H21.500V30H29.500V35.500H37.500V25H45V45ZM21.500 45V36M29.500 45V35M37.500 45V35" />
        </ToolButton>
        <ToolButton label="Layouts">
          <rect x="14" y="13" width="11.500" height="12" rx="3" />
          <rect x="32" y="13" width="11.500" height="12" rx="3" />
          <rect x="14" y="31" width="11.500" height="12" rx="3" />
          <rect x="32" y="31" width="11.500" height="12" rx="3" />
        </ToolButton>
        <ToolButton label="Strategies">
          <g strokeLinecap="round" strokeLinejoin="round">
            <path d="M10 37 20 27 30 37M29 17 38 26 47 18" strokeWidth="10" />
            <path d="M10 37 20 27 30 37M29 17 38 26 47 18" strokeWidth="4.500" stroke="#000" />
            <path d="M24 27 29 22M29 29 33 25" />
          </g>
        </ToolButton>
        <ToolButton label="Add">
          <circle cx="28" cy="28" r="20" />
          <path d="M17.500 28H38.500M28 17.500V38.500" />
        </ToolButton>
        <ToolButton label="Alerts">
          <circle cx="28.500" cy="29.500" r="16.500" />
          <path d="M29.500 19.500V31.500H20.500M8.500 18.500 17.500 9M40 9 49 18.500" />
        </ToolButton>
        <ToolButton label="Chart type">
          <path d="M18 15.500H26V40H18ZM22 15V8.500M22 40V47M34 20.500H42V35H34ZM38 20V14M38 35V41" />
        </ToolButton>
        <ToolButton label="Replay">
          <path d="M14 28 26.500 17V39ZM30 28 42.500 17V39Z" />
        </ToolButton>
        <ToolButton label="Object tree">
          <path d="M28.500 10.500 48 23 28.500 35.500 9 23ZM8 34 28.500 46.500 49 34" />
        </ToolButton>
        <ToolButton label="More">
          <circle cx="12.500" cy="28" r="4" />
          <circle cx="28" cy="28" r="4" />
          <circle cx="43.500" cy="28" r="4" />
        </ToolButton>
        <Separator />
        <ToolButton label="Undo">
          <path d="M24.500 18 17 25 24.500 32M17 25H27Q39 25 39.500 38" />
        </ToolButton>
        <ToolButton label="Fullscreen">
          <path d="M10 22V15Q10 9.500 16 9.500H22.500M34.500 9.500H41Q47 9.500 47 15V22M47 34V41Q47 46.500 41 46.500H34.500M22.500 46.500H16Q10 46.500 10 41V34" />
        </ToolButton>
        <ToolButton label="Redo" disabled>
          <path d="M31.500 18 39 25 31.500 32M39 25H29Q17 25 16.500 38" />
        </ToolButton>
        <Separator />
        <ToolButton label="Ideas">
          <path d="M18.500 37V34.500A16.500 16.500 0 1 1 38.500 34.500V37M28.500 13.500V32M19.500 22.500H37.500" />
          <path d="M18 36.500H39V43H18ZM22 43V48.500H35V43" />
        </ToolButton>
        <ToolButton label="Share">
          <path d="M20 21H14Q10 21 10 25V43Q10 47.500 14 47.500H42Q46.500 47.500 46.500 43V25Q46.500 21 42 21H36M28.500 38V9M21 17 28.500 9 36 17" />
        </ToolButton>
      </div>
      <svg
        viewBox="0 0 44 48"
        className="absolute right-1 bottom-2 h-12 w-11"
        fill="none"
        stroke="#fff"
        strokeWidth="7"
        strokeLinecap="round"
        aria-hidden="true"
      >
        <path d="M36 7Q35 33 8 38" />
      </svg>
    </footer>
  );
}

export default function App() {
  return (
    <div className="flex min-h-screen flex-col bg-black font-['Inter',sans-serif]">
      <StatusBar />
      <NavTabs />
      <main className="flex flex-1 flex-col bg-[#151721]">
        <PricePane />
        <div className="h-0.5 bg-[#5d606b]" />
        <IndicatorPane />
        <TimeAxis />
      </main>
      <BottomBar />
    </div>
  );
}
